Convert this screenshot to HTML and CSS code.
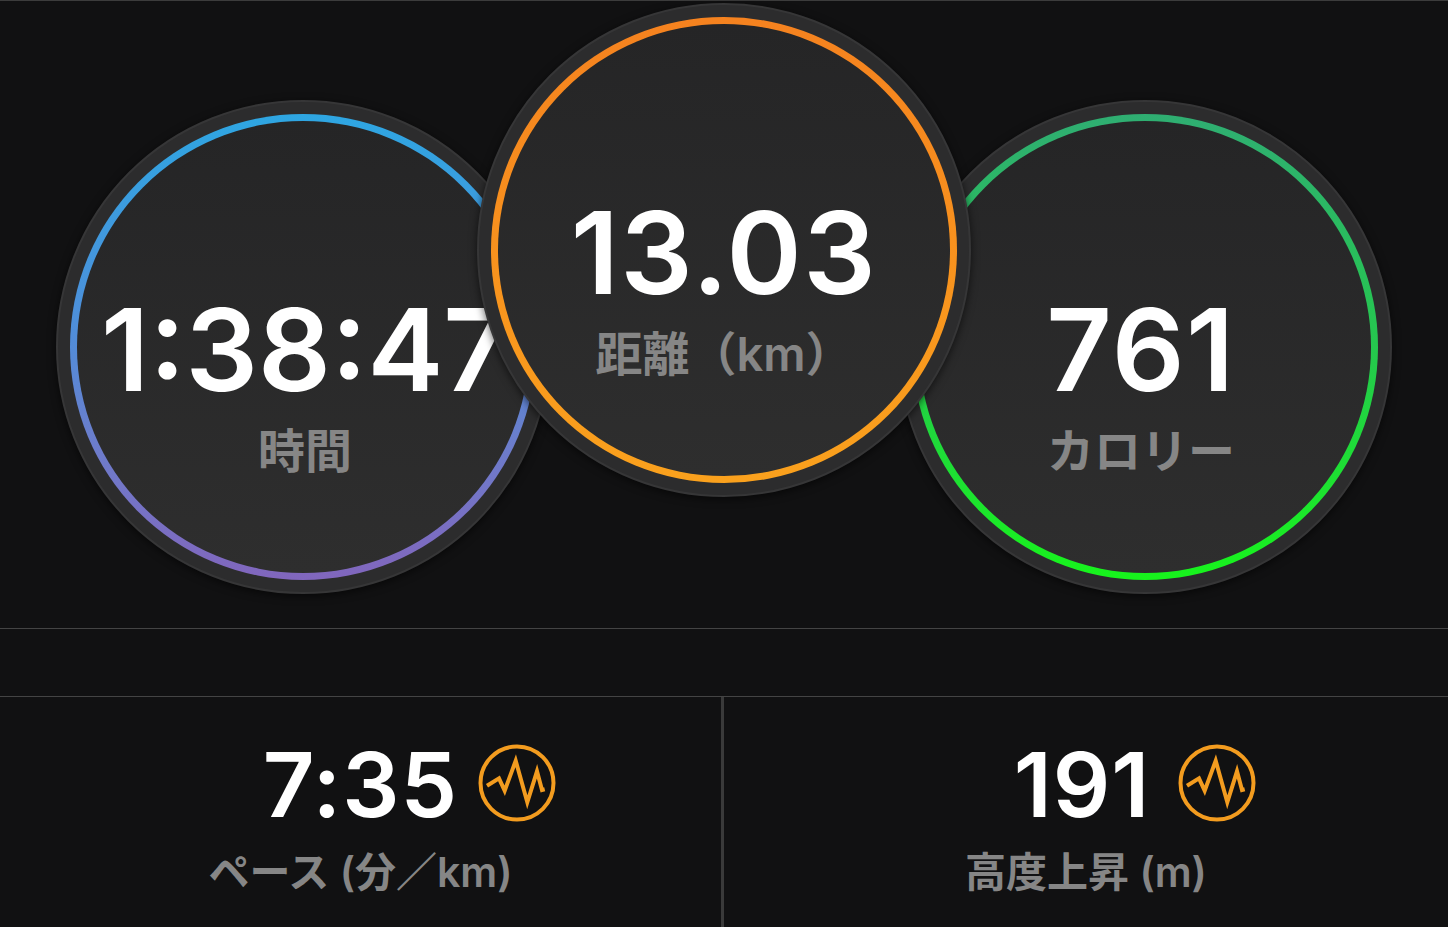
FILE: index.html
```html
<!DOCTYPE html>
<html lang="ja">
<head>
  <meta charset="UTF-8"/>
  <meta name="viewport" content="width=device-width,initial-scale=1"/>
  <title>アクティビティ</title>
  <link rel="stylesheet" href="styles.css">
</head>
<body>

  <div id="app">
    <div class="circles">
      <div class="stat side">
        <div class="ring ring-time">
          <div class="face">
            <span class="value">1:38:47</span>
            <span class="label">時間</span>
          </div>
        </div>
      </div>

      <div class="stat center">
        <div class="ring ring-dist">
          <div class="face">
            <span class="value">13.03</span>
            <span class="label">距離（km）</span>
          </div>
        </div>
      </div>

      <div class="stat side">
        <div class="ring ring-cal">
          <div class="face">
            <span class="value">761</span>
            <span class="label">カロリー</span>
          </div>
        </div>
      </div>
    </div>

    <div class="spacer"></div>

    <div class="bottom">
      <div class="cell cell-pace">
        <div class="cell-top">
          <span class="small-value">7:35</span>
          <svg class="pulse" viewBox="0 0 78 78"><circle cx="39" cy="39" r="36.5"/><path d="M9 41.7 21 34.3 26.7 46.7 37.7 16.7 49.3 58.3 59 27.3 64 46 66.7 45.3"/></svg>
        </div>
        <span class="small-label">ペース (分／km)</span>
      </div>
      <div class="cell cell-climb">
        <div class="cell-top">
          <span class="small-value">191</span>
          <svg class="pulse" viewBox="0 0 78 78"><circle cx="39" cy="39" r="36.5"/><path d="M9 41.7 21 34.3 26.7 46.7 37.7 16.7 49.3 58.3 59 27.3 64 46 66.7 45.3"/></svg>
        </div>
        <span class="small-label">高度上昇 (m)</span>
      </div>
    </div>
  </div>

</body>
</html>
```

FILE: styles.css
```css
* {
  box-sizing: border-box;
}
body {
  margin: 0;
  background: #111112;
  font-family: Inter, 'Noto Sans CJK JP', sans-serif;
  overflow: hidden;
}

#app {
  width: 1448px;
  height: 927px;
  display: flex;
  flex-direction: column;
  border-top: 1px solid #3c3c3c;
}

.circles {
  height: 628px;
  display: flex;
  align-items: flex-start;
  padding: 2px 0 0 56px;
  border-bottom: 1px solid #444;
}

.stat {
  flex: none;
  width: 494px;
  height: 494px;
  padding: 12px;
  border-radius: 50%;
  background: #2c2c2d;
  border: 2px solid #363637;
  box-shadow: 0 2px 8px rgba(0, 0, 0, 0.6);
}
.side {
  margin-top: 97px;
}
.center {
  position: relative;
  z-index: 1;
  margin: 0 -73px;
}

.ring {
  height: 100%;
  padding: 7px;
  border-radius: 50%;
}
.ring-time {
  background: linear-gradient(#2ea6e2 0%, #4e8fda 45%, #6d7ccb 72%, #8166bd 100%);
}
.ring-dist {
  background: linear-gradient(#f5821f, #faa11d);
}
.ring-cal {
  background: linear-gradient(#2fae72 0%, #25c84e 50%, #17f41c 100%);
}

.face {
  height: 100%;
  border-radius: 50%;
  background: linear-gradient(#252526, #2e2e2e);
  display: flex;
  flex-direction: column;
  align-items: center;
  justify-content: center;
  white-space: nowrap;
  padding-top: 72px;
}
.ring-time .face {
  padding-left: 4px;
}
.ring-cal .face {
  padding-right: 8px;
}

.value {
  color: #fff;
  font-size: 114px;
  font-weight: 600;
  letter-spacing: 1.5px;
  line-height: 118px;
  margin-top: 6px;
}
.ring-time .value {
  letter-spacing: 0;
}
.label {
  color: #868686;
  font-size: 47px;
  font-weight: 600;
  line-height: 60px;
  margin-top: 12px;
}

.spacer {
  height: 68px;
  border-bottom: 1px solid #444;
  flex: none;
}

.bottom {
  flex: 1;
  display: flex;
}

.cell {
  flex: 1;
  display: flex;
  flex-direction: column;
  align-items: center;
  padding-top: 46px;
}
.cell-pace {
  flex: none;
  width: 724px;
  border-right: 3px solid #3a3a3a;
}

.cell-top {
  display: flex;
  align-items: center;
  gap: 20px;
  height: 80px;
}
.cell-climb .cell-top {
  gap: 28px;
}
.small-value {
  color: #fff;
  font-size: 90px;
  font-weight: 600;
  letter-spacing: 1px;
  line-height: 80px;
  padding-top: 3px;
}
.small-label {
  color: #868686;
  font-size: 41px;
  font-weight: 600;
  line-height: 50px;
  margin-top: 24px;
}

.pulse {
  width: 78px;
  height: 78px;
  margin-right: -98px;
  fill: none;
  stroke: #f39c1f;
  stroke-width: 4;
}
```
